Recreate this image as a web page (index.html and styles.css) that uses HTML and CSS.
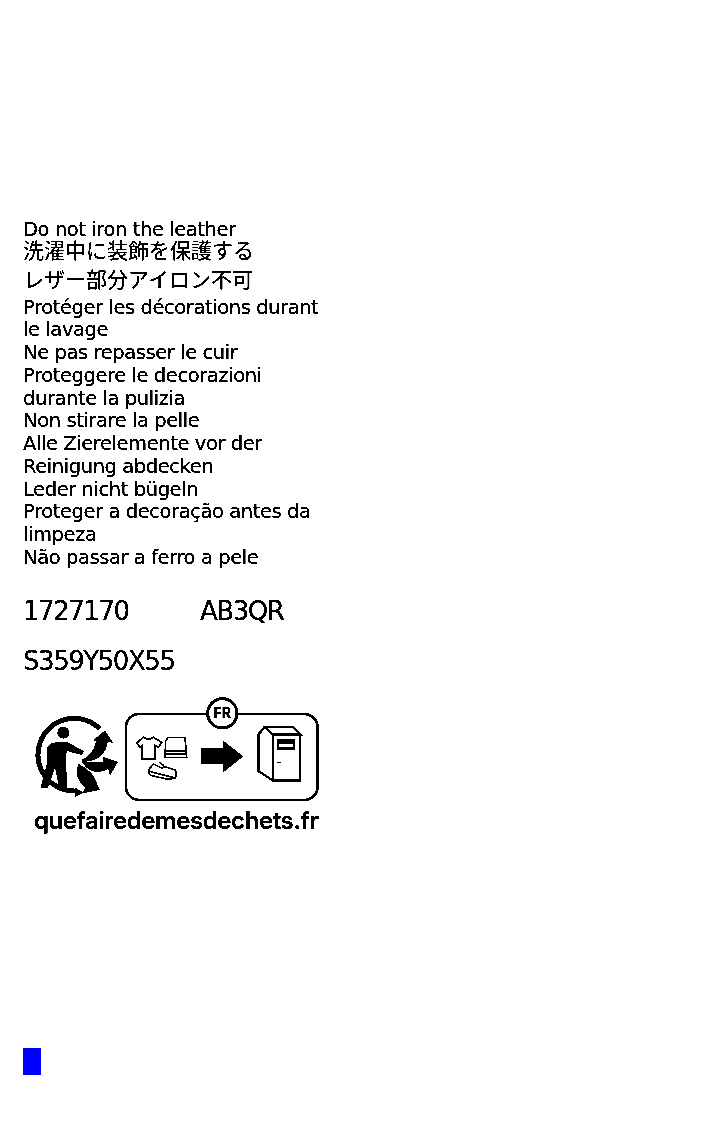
FILE: index.html
```html
<!DOCTYPE html>
<html lang="en">
<head>
<meta charset="utf-8">
<title>Care label</title>
<link rel="stylesheet" href="styles.css">
</head>
<body>
<main class="label">
  <section class="care">
    <p>Do not iron the leather</p>
    <p class="jp">洗濯中に装飾を保護する</p>
    <p class="jp jp-tall">レザー部分アイロン不可</p>
    <p>Protéger les décorations durant le lavage</p>
    <p>Ne pas repasser le cuir</p>
    <p>Proteggere le decorazioni durante la pulizia</p>
    <p>Non stirare la pelle</p>
    <p>Alle Zierelemente vor der Reinigung abdecken</p>
    <p>Leder nicht bügeln</p>
    <p>Proteger a decoração antes da limpeza</p>
    <p>Não passar a ferro a pele</p>
  </section>
  <section class="codes">
    <p class="code-row"><span class="code-a">1727170</span><span>AB3QR</span></p>
    <p>S359Y50X55</p>
  </section>
  <svg class="logo" viewBox="0 0 930 435" width="310" height="145" aria-label="quefairedemesdechets.fr">
    <path class="ring" d="M240 105A109 109 0 1 0 165 291"/>
    <path class="solid" d="M165 281L192 296L165 309Z"/>
    <circle class="solid" cx="130" cy="116" r="18"/>
    <path class="solid" d="M94 146L142 144L192 172L186 183L140 171L138 201L142 285L118 285L105 222L84 281L62 281L80 211L80 161Z"/>
    <path class="solid" d="M186 197C206 190 222 170 228 143L220 138L255 109L280 148L264 143C258 183 232 205 186 203Z"/>
    <path class="solid" d="M186 201C212 204 235 205 250 204L250 189L294 203L270 245L265 225C240 240 203 238 186 203Z"/>
    <path class="solid" d="M175 209C210 225 225 250 228 262L240 288L188 298L196 280C170 262 164 236 175 209Z"/>
    <rect class="box" x="318" y="60" width="575" height="258" rx="40"/>
    <circle class="badge" cx="607" cy="58" r="44"/>
    <text class="badge-text" x="607" y="73" text-anchor="middle">FR</text>
    <path class="thin" d="M370 130L380 135L390 135L400 130L425 145L415 160L405 155L405 195L365 195L365 155L360 160L350 147Z"/>
    <path class="thin" d="M445 130L495 130L500 190L435 190L437 140ZM437 170L500 170M437 180L500 180"/>
    <path class="thin" d="M400 210L425 222L435 218L465 228Q472 240 465 252L445 256L395 245Q382 238 388 225ZM388 232L465 252M418 205L432 215"/>
    <path class="solid" d="M543 162L610 162L610 140L670 187L610 235L610 210L543 210Z"/>
    <path class="cabinet" d="M715 121L735 99L758 121L758 259L715 231Z"/>
    <path class="cabinet" d="M735 99L820 99L840 121L758 121Z"/>
    <rect class="cabinet" x="758" y="121" width="82" height="138"/>
    <rect class="solid" x="770" y="136" width="55" height="33"/>
    <rect class="screen-slot" x="776" y="149" width="44" height="11"/>
    <path class="solid" d="M770 203H782V207H770ZM762 259H776V265H762ZM828 259H842V265H828Z"/>
    <text class="brand" x="42" y="405" textLength="855">quefairedemesdechets.fr</text>
  </svg>
  <div class="swatch"></div>
</main>
</body>
</html>
```
FILE: styles.css
```css
html, body {
  margin: 0;
  background: #fff;
}
body {
  font-family: "DejaVu Sans", Verdana, sans-serif;
  color: #000;
  filter: brightness(.75) contrast(20);
}
.label {
  display: flex;
  flex-direction: column;
  align-items: flex-start;
  padding: 219px 0 0 23px;
  width: 300px;
}
p {
  margin: 0;
}
.care {
  font-size: 19.5px;
  line-height: 22.75px;
  letter-spacing: -.42px;
  width: 300px;
}
.jp {
  font-family: "Noto Sans CJK JP", sans-serif;
  font-size: 21px;
  letter-spacing: 0;
  margin-top: -4px;
}
.jp-tall {
  line-height: 34px;
  margin-top: 0;
  margin-bottom: 2px;
}
.codes {
  font-size: 26px;
  line-height: 50px;
  letter-spacing: -1.45px;
  margin-top: 16px;
}
.code-row {
  display: flex;
}
.code-a {
  width: 177px;
}
.logo {
  display: block;
  margin: 8px 0 0 -3px;
  shape-rendering: crispEdges;
}
.ring {
  fill: none;
  stroke: #000;
  stroke-width: 15;
}
.solid {
  fill: #000;
}
.screen-slot {
  fill: #fff;
}
.box {
  fill: #fff;
  stroke: #000;
  stroke-width: 8;
}
.badge {
  fill: #fff;
  stroke: #000;
  stroke-width: 9;
}
.badge-text {
  font: 700 42px "Inter", sans-serif;
  fill: #000;
}
.thin {
  fill: #fff;
  stroke: #000;
  stroke-width: 5;
}
.cabinet {
  fill: #fff;
  stroke: #000;
  stroke-width: 7;
}
.brand {
  font: 600 72px "Inter", sans-serif;
  fill: #000;
}
.swatch {
  width: 18px;
  height: 27px;
  margin-top: 209px;
  background: #00f;
}
```
